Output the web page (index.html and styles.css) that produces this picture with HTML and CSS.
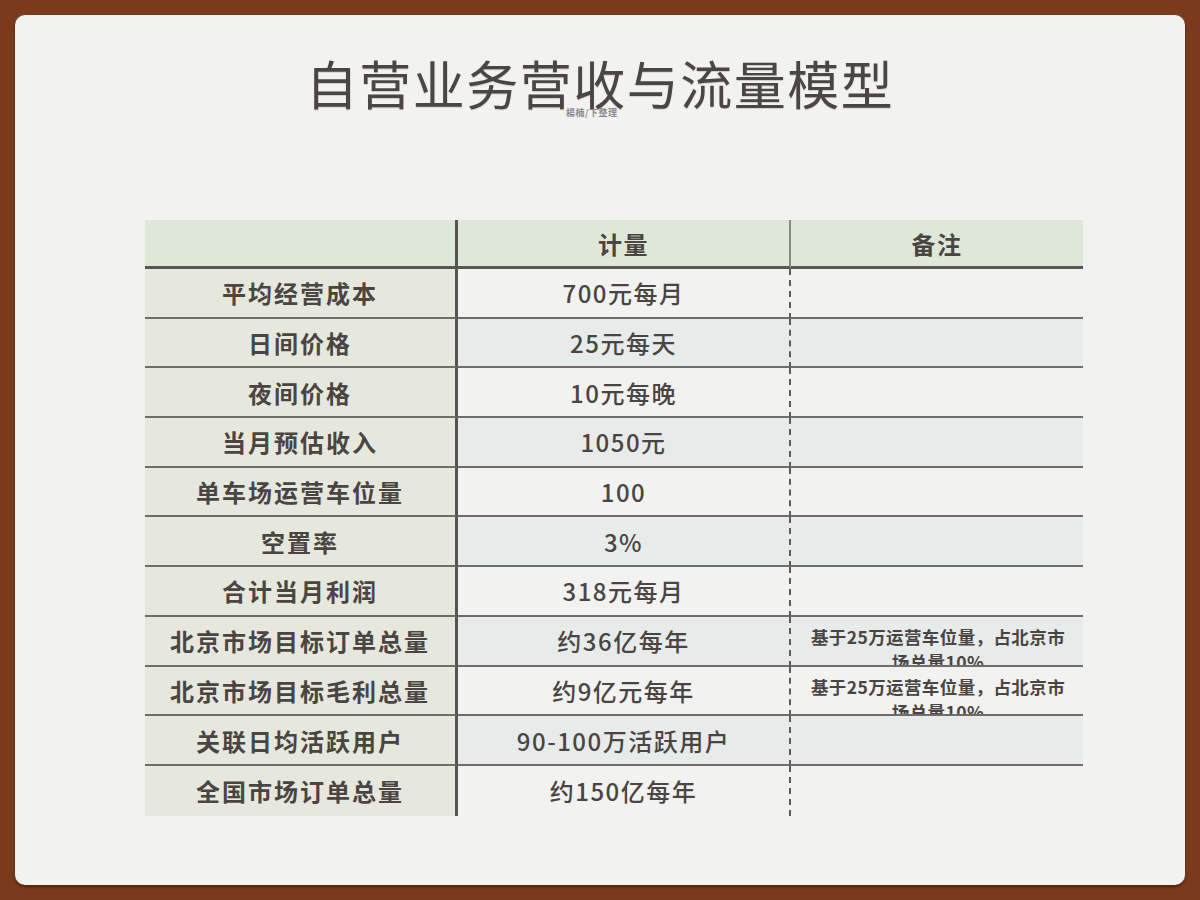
FILE: index.html
```html
<!DOCTYPE html>
<html lang="zh">
<head>
<meta charset="utf-8">
<title>自营业务营收与流量模型</title>
<link rel="stylesheet" href="styles.css">
</head>
<body>
<div class="slide">
  <div class="title-wrap">
    <h1 class="title">自营业务营收与流量模型</h1>
    <span class="credit">楊楠/下整理</span>
  </div>
  <div class="grid">
    <div class="c1 head"></div>
    <div class="c2 head">计量</div>
    <div class="c3 head">备注</div>

    <div class="c1">平均经营成本</div><div class="c2">700元每月</div><div class="c3"></div>
    <div class="c1">日间价格</div><div class="c2 alt">25元每天</div><div class="c3 alt"></div>
    <div class="c1">夜间价格</div><div class="c2">10元每晚</div><div class="c3"></div>
    <div class="c1">当月预估收入</div><div class="c2 alt">1050元</div><div class="c3 alt"></div>
    <div class="c1">单车场运营车位量</div><div class="c2">100</div><div class="c3"></div>
    <div class="c1">空置率</div><div class="c2 alt">3%</div><div class="c3 alt"></div>
    <div class="c1">合计当月利润</div><div class="c2">318元每月</div><div class="c3"></div>
    <div class="c1">北京市场目标订单总量</div><div class="c2 alt">约36亿每年</div><div class="c3 alt note">基于25万运营车位量，占北京市场总量10%</div>
    <div class="c1">北京市场目标毛利总量</div><div class="c2">约9亿元每年</div><div class="c3 note">基于25万运营车位量，占北京市场总量10%</div>
    <div class="c1">关联日均活跃用户</div><div class="c2 alt">90-100万活跃用户</div><div class="c3 alt"></div>
    <div class="c1 last">全国市场订单总量</div><div class="c2 last">约150亿每年</div><div class="c3 last"></div>
  </div>
</div>
</body>
</html>
```
FILE: styles.css
```css
html, body {
  margin: 0;
  padding: 0;
}
body {
  width: 1200px;
  height: 900px;
  background: #7a3a1c;
  font-family: "Noto Sans CJK SC", "Noto Sans", sans-serif;
  color: #4a4543;
  overflow: hidden;
}
.slide {
  position: relative;
  margin: 15px;
  height: 870px;
  box-sizing: border-box;
  background: #f2f2f0;
  border-radius: 10px;
  box-shadow: 0 2px 3px rgba(40, 15, 0, 0.5);
  padding-top: 33px;
}
.title-wrap {
  position: relative;
  height: 70px;
}
.title {
  margin: 0;
  text-align: center;
  font-size: 52px;
  line-height: 70px;
  font-weight: 400;
  letter-spacing: 1.5px;
  color: #4b4643;
  text-shadow: 0 1px 1px rgba(0, 0, 0, 0.15);
}
.credit {
  position: absolute;
  left: 551px;
  top: 58px;
  font-size: 9px;
  font-weight: 700;
  color: #8a8a8e;
  letter-spacing: 0.5px;
}
.grid {
  margin: 102px 0 0 130px;
  display: grid;
  grid-template-columns: 313px 333px 292px;
  grid-template-rows: 49px repeat(11, 49.7px);
  width: 938px;
}
.grid > div {
  box-sizing: border-box;
  display: flex;
  align-items: center;
  justify-content: center;
  font-size: 24px;
  letter-spacing: 1.5px;
  border-bottom: 2px solid #6f6c6a;
  overflow: hidden;
  white-space: nowrap;
}
.grid > .head {
  background: #dfe7d9;
  border-bottom: 3px solid #5a5654;
  font-weight: 700;
}
.grid > .c1 {
  background: #e6e8dd;
  border-right: 3px solid #575351;
  font-weight: 700;
  letter-spacing: 2px;
}
.grid > .c1.head {
  background: #dfe7d9;
}
.grid > .c2 {
  font-weight: 500;
  border-right: 2px dashed #5f5b59;
}
.grid > .c2.head {
  border-right: 2px solid #8a8684;
  font-weight: 700;
}
.grid > .c3.head {
  font-weight: 700;
}
.grid > .alt {
  background: #e7ecea;
}
.grid > .last {
  border-bottom: none;
}
.grid > .note {
  align-items: flex-start;
  white-space: normal;
  font-size: 17.5px;
  font-weight: 700;
  letter-spacing: 0.4px;
  line-height: 25px;
  text-align: center;
  padding: 7px 12px 0 14px;
}
```
